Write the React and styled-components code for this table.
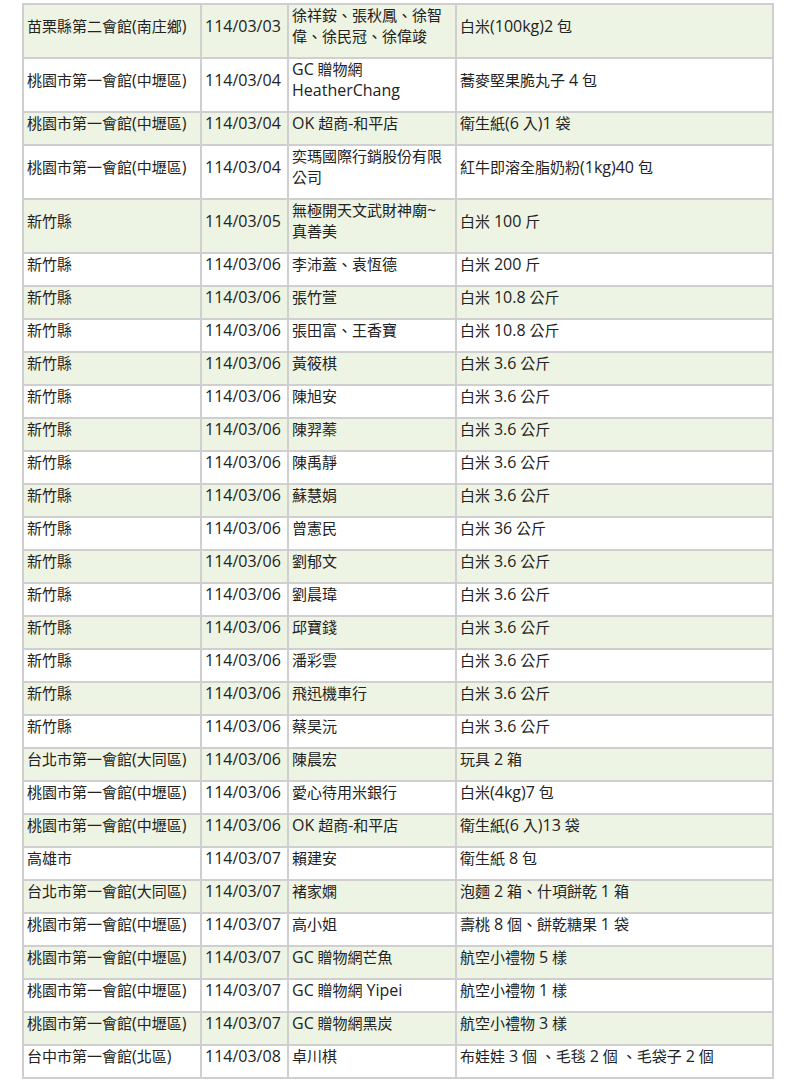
import React from 'react';
import styled, { createGlobalStyle } from 'styled-components';

const GlobalStyle = createGlobalStyle`
  body {
    margin: 0;
    background: #ffffff;
  }
`;

const Page = styled.div`
  padding: 3px 0 0 22px;
  font-family: "Open Sans", "Noto Sans CJK TC", sans-serif;
  font-size: 15px;
  color: #222;
`;

const Table = styled.table`
  width: 750px;
  table-layout: fixed;
  border-collapse: collapse;
  border: 2px solid #cfcfcf;
`;

const Col = styled.col`
  width: ${(p) => p.$w}px;
`;

const Row = styled.tr`
  background: ${(p) => (p.$shaded ? '#eef4e3' : '#ffffff')};
`;

const Cell = styled.td`
  border: 2px solid #cfcfcf;
  padding: 0 3px 10px 3px;
  line-height: 21px;
  vertical-align: middle;
  white-space: ${(p) => (p.$nowrap ? 'nowrap' : 'normal')};
  overflow: hidden;
`;

// latin runs sit a little larger than the CJK text in the original
const Latin = styled.span`
  font-size: 16px;
`;

const rows = [
  ['苗栗縣第二會館(南庄鄉)', '114/03/03', ['徐祥銨、張秋鳳、徐智', '偉、徐民冠、徐偉竣'], '白米(100kg)2 包'],
  ['桃園市第一會館(中壢區)', '114/03/04', ['GC 贈物網', 'HeatherChang'], '蕎麥堅果脆丸子 4 包'],
  ['桃園市第一會館(中壢區)', '114/03/04', 'OK 超商-和平店', '衛生紙(6 入)1 袋'],
  ['桃園市第一會館(中壢區)', '114/03/04', ['奕瑪國際行銷股份有限', '公司'], '紅牛即溶全脂奶粉(1kg)40 包'],
  ['新竹縣', '114/03/05', ['無極開天文武財神廟~', '真善美'], '白米 100 斤'],
  ['新竹縣', '114/03/06', '李沛蓋、袁恆德', '白米 200 斤'],
  ['新竹縣', '114/03/06', '張竹萱', '白米 10.8 公斤'],
  ['新竹縣', '114/03/06', '張田富、王香寶', '白米 10.8 公斤'],
  ['新竹縣', '114/03/06', '黃筱棋', '白米 3.6 公斤'],
  ['新竹縣', '114/03/06', '陳旭安', '白米 3.6 公斤'],
  ['新竹縣', '114/03/06', '陳羿蓁', '白米 3.6 公斤'],
  ['新竹縣', '114/03/06', '陳禹靜', '白米 3.6 公斤'],
  ['新竹縣', '114/03/06', '蘇慧娟', '白米 3.6 公斤'],
  ['新竹縣', '114/03/06', '曾憲民', '白米 36 公斤'],
  ['新竹縣', '114/03/06', '劉郁文', '白米 3.6 公斤'],
  ['新竹縣', '114/03/06', '劉晨瑋', '白米 3.6 公斤'],
  ['新竹縣', '114/03/06', '邱寶錢', '白米 3.6 公斤'],
  ['新竹縣', '114/03/06', '潘彩雲', '白米 3.6 公斤'],
  ['新竹縣', '114/03/06', '飛迅機車行', '白米 3.6 公斤'],
  ['新竹縣', '114/03/06', '蔡昊沅', '白米 3.6 公斤'],
  ['台北市第一會館(大同區)', '114/03/06', '陳晨宏', '玩具 2 箱'],
  ['桃園市第一會館(中壢區)', '114/03/06', '愛心待用米銀行', '白米(4kg)7 包'],
  ['桃園市第一會館(中壢區)', '114/03/06', 'OK 超商-和平店', '衛生紙(6 入)13 袋'],
  ['高雄市', '114/03/07', '賴建安', '衛生紙 8 包'],
  ['台北市第一會館(大同區)', '114/03/07', '褚家嫻', '泡麵 2 箱、什項餅乾 1 箱'],
  ['桃園市第一會館(中壢區)', '114/03/07', '高小姐', '壽桃 8 個、餅乾糖果 1 袋'],
  ['桃園市第一會館(中壢區)', '114/03/07', 'GC 贈物網芒魚', '航空小禮物 5 樣'],
  ['桃園市第一會館(中壢區)', '114/03/07', 'GC 贈物網 Yipei', '航空小禮物 1 樣'],
  ['桃園市第一會館(中壢區)', '114/03/07', 'GC 贈物網黑炭', '航空小禮物 3 樣'],
  ['台中市第一會館(北區)', '114/03/08', '卓川棋', '布娃娃 3 個 、毛毯 2 個 、毛袋子 2 個'],
];

const Mixed = ({ text }) =>
  text
    .split(/([\x21-\x7e][\x20-\x7e]*[\x21-\x7e]|[\x21-\x7e])/)
    .map((part, i) =>
      i % 2 === 1 ? <Latin key={i}>{part}</Latin> : part
    );

const Donor = ({ value }) =>
  Array.isArray(value) ? (
    <>
      <Mixed text={value[0]} />
      <br />
      <Mixed text={value[1]} />
    </>
  ) : (
    <Mixed text={value} />
  );

const App = () => {
  return (
    <Page>
      <GlobalStyle />
      <Table>
        <colgroup>
          <Col $w={178} />
          <Col $w={87} />
          <Col $w={168} />
          <Col $w={317} />
        </colgroup>
        <tbody>
          {rows.map((r, i) => (
            <Row key={i} $shaded={i % 2 === 0}>
              <Cell $nowrap>
                <Mixed text={r[0]} />
              </Cell>
              <Cell $nowrap>
                <Mixed text={r[1]} />
              </Cell>
              <Cell>
                <Donor value={r[2]} />
              </Cell>
              <Cell>
                <Mixed text={r[3]} />
              </Cell>
            </Row>
          ))}
        </tbody>
      </Table>
    </Page>
  );
};

export default App;
